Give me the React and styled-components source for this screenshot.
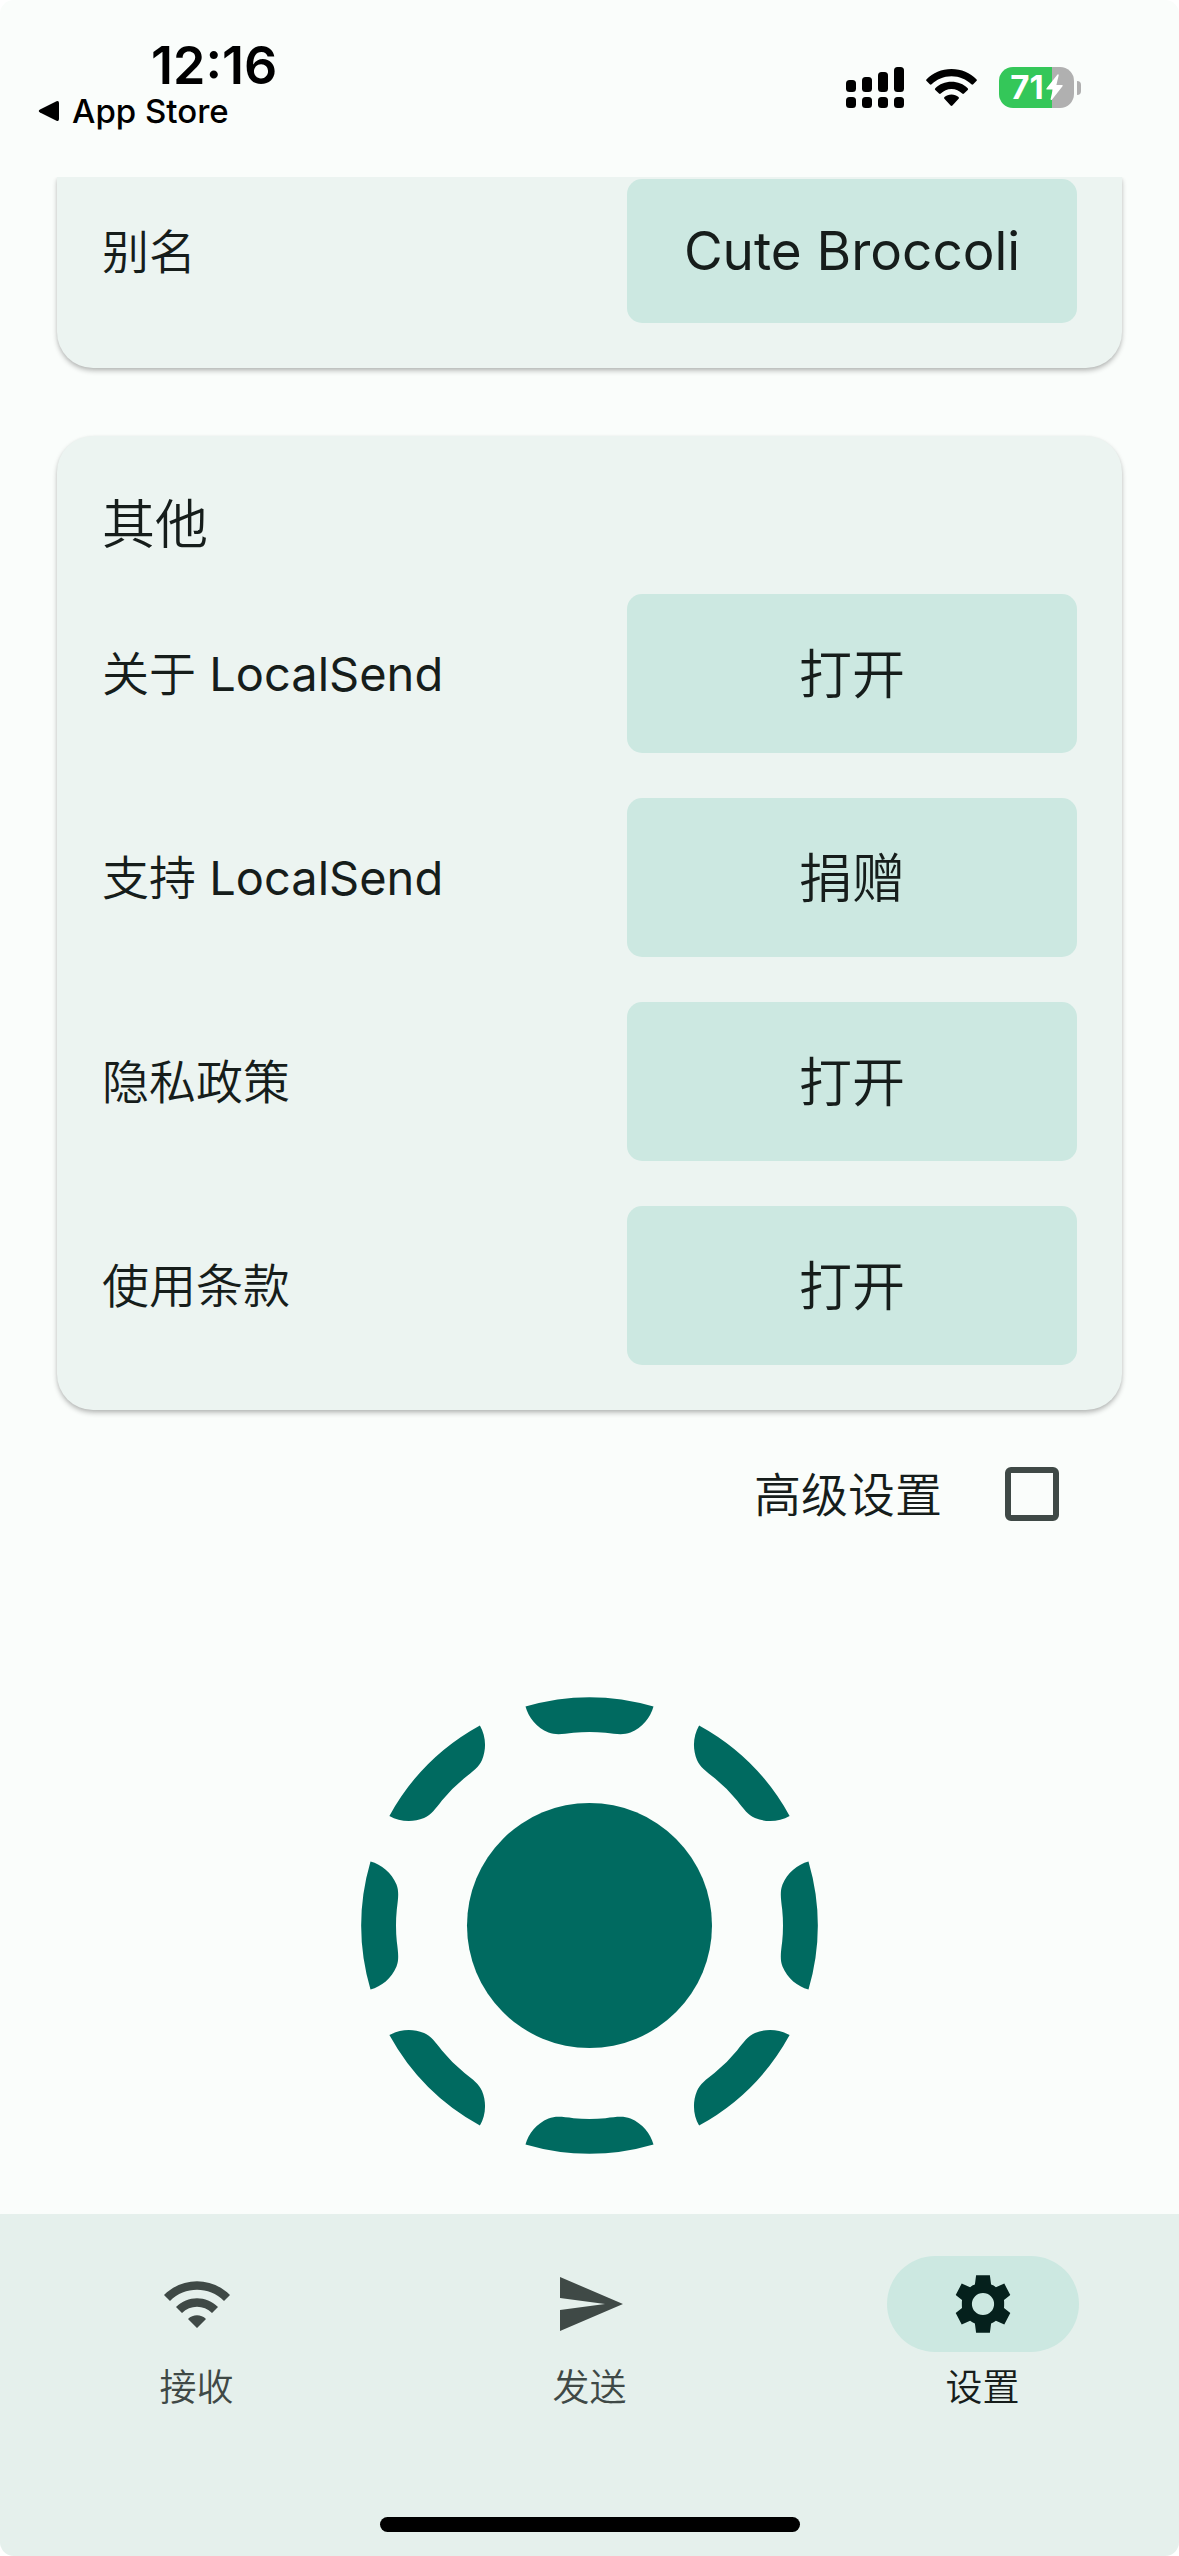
import React, { useState } from "react";
import styled, { createGlobalStyle } from "styled-components";

const color = {
  surface: "#fafdfb",
  card: "#ecf4f1",
  fill: "#cce8e1",
  nav: "#e5f0ec",
  primary: "#006a60",
  text: "#161d1b",
  muted: "#3f4946",
  strong: "#05201c",
};

const GlobalStyle = createGlobalStyle`
  * { box-sizing: border-box; }
  body {
    margin: 0;
    background: #ffffff;
    color: ${color.text};
    font-family: Inter, "Noto Sans CJK SC", sans-serif;
    font-weight: 350;
  }
  button, input { font: inherit; color: inherit; }
`;

const Screen = styled.div`
  display: flex;
  flex-direction: column;
  min-height: 100vh;
  border-radius: 14px;
  overflow: hidden;
  background: ${color.surface};
`;

const StatusBar = styled.header`
  display: flex;
  justify-content: space-between;
  align-items: flex-start;
  height: 177px;
  padding: 41px 98px 0 38px;
  color: #000000;
`;

const ClockColumn = styled.div`
  display: flex;
  flex-direction: column;
`;

const Clock = styled.time`
  padding-left: 113px;
  font-size: 52px;
  line-height: 50px;
  font-weight: 600;
`;

const BackLink = styled.a`
  display: flex;
  align-items: center;
  gap: 12px;
  font-size: 33px;
  line-height: 40px;
  font-weight: 500;
  color: inherit;
  text-decoration: none;
`;

const StatusIcons = styled.div`
  display: flex;
  align-items: center;
  gap: 22px;
  padding-top: 26px;
`;

const Battery = styled.div`
  display: flex;
  align-items: center;
  gap: 3px;
`;

const BatteryBody = styled.div`
  display: flex;
  align-items: center;
  justify-content: center;
  gap: 2px;
  width: 75px;
  height: 41px;
  border-radius: 14px;
  background: linear-gradient(to right, #34c759 71%, #b0b0b0 71%);
  color: #ffffff;
  font-size: 33px;
  line-height: 41px;
  font-weight: 700;
`;

const BatteryTip = styled.div`
  width: 4px;
  height: 14px;
  border-radius: 0 4px 4px 0;
  background: #b0b0b0;
`;

const Main = styled.main`
  display: flex;
  flex: 1;
  flex-direction: column;
  overflow: hidden;
  padding: 0 57px;
`;

const Card = styled.section`
  display: flex;
  flex-direction: column;
  gap: 45px;
  padding: ${(p) => (p.$scrolled ? "2px" : "45px")} 45px 45px;
  margin-bottom: ${(p) => (p.$scrolled ? "68px" : "12px")};
  border-radius: ${(p) => (p.$scrolled ? "0 0 36px 36px" : "36px")};
  background: ${color.card};
  box-shadow: 0 3px 5px rgba(0, 0, 0, 0.24), 0 1px 3px rgba(0, 0, 0, 0.06);
`;

const CardTitle = styled.h2`
  margin: 0 0 -20px;
  font-size: 53px;
  line-height: 88px;
  font-weight: inherit;
`;

const Row = styled.div`
  display: flex;
  align-items: center;
  justify-content: space-between;
`;

const RowLabel = styled.label`
  padding-top: 1px;
  font-size: 47px;
  line-height: 60px;
`;

const AppName = styled.span`
  font-weight: 400;
`;

const AliasInput = styled.input`
  width: 450px;
  height: 144px;
  padding: 0 24px;
  border: 0;
  border-radius: 15px;
  background: ${color.fill};
  font-size: 53px;
  font-weight: 400;
  text-align: center;
`;

const ActionButton = styled.button`
  width: 450px;
  height: 159px;
  padding: 2px 0 0;
  border: 0;
  border-radius: 15px;
  background: ${color.fill};
  font-size: 53px;
  line-height: 84px;
`;

const AdvancedRow = styled.div`
  display: flex;
  align-items: center;
  justify-content: flex-end;
  gap: 63px;
  height: 144px;
  padding-right: 63px;
`;

const Checkbox = styled.input`
  appearance: none;
  width: 54px;
  height: 54px;
  margin: 0;
  border: 6px solid ${color.muted};
  border-radius: 6px;
  &:checked { background: ${color.primary}; border-color: ${color.primary}; }
`;

const LogoArea = styled.div`
  display: flex;
  justify-content: center;
  padding: 131px 0 60px;
`;

const NavBar = styled.footer`
  display: flex;
  flex-direction: column;
  align-items: center;
  gap: 105px;
  padding: 42px 0 24px;
  background: ${color.nav};
`;

const NavList = styled.nav`
  display: grid;
  grid-template-columns: repeat(3, 1fr);
  width: 100%;
`;

const NavButton = styled.button`
  display: flex;
  flex-direction: column;
  align-items: center;
  gap: 12px;
  padding: 0;
  border: 0;
  background: none;
  font-size: 37px;
  line-height: 48px;
  color: ${(p) => (p.$active ? color.text : color.muted)};
`;

const NavPill = styled.span`
  display: flex;
  align-items: center;
  justify-content: center;
  width: 192px;
  height: 96px;
  border-radius: 48px;
  background: ${(p) => (p.$active ? color.fill : "transparent")};
  color: ${(p) => (p.$active ? color.strong : color.muted)};
`;

const HomeIndicator = styled.div`
  width: 420px;
  height: 15px;
  border-radius: 8px;
  background: #000000;
`;

const BackTriangle = () => (
  <svg width="22" height="22" viewBox="0 0 22 22" aria-hidden="true">
    <path d="M2 9.500 18.500 1.300Q21 .4 21 3v16q0 2.600-2.500 1.700L2 12.500Q-.5 11 2 9.500z" fill="currentColor" />
  </svg>
);

const SignalIcon = () => (
  <svg width="58" height="41" viewBox="0 0 58 41" aria-hidden="true">
    {[13, 10, 5, 0].map((top, i) => (
      <g key={top}>
        <rect x={i * 16} y={top} width="10" height={25 - top} rx="3.500" />
        <rect x={i * 16} y="30" width="10" height="11" rx="3.500" />
      </g>
    ))}
  </svg>
);

const StatusWifiIcon = () => (
  <svg width="51" height="38" viewBox="0 0 51 38" aria-hidden="true">
    <path d="M25.500 0C15.500 0 6.800 3.900.6 10.200q-.9 1 0 1.900l3.200 3.200q.9.800 1.800 0C10.800 10.200 17.700 7.200 25.500 7.200s14.700 3 19.900 8.100q.9.800 1.800 0l3.200-3.200q.9-.9 0-1.900C44.200 3.900 35.500 0 25.500 0z" />
    <path d="M25.500 12.800c-6.300 0-12 2.400-16.200 6.400q-.9.900 0 1.800l3.700 3.600q.9.800 1.800 0c2.800-2.700 6.500-4.500 10.700-4.500s7.900 1.800 10.700 4.500q.9.800 1.800 0l3.700-3.600q.9-.9 0-1.800c-4.200-4-9.900-6.400-16.200-6.400z" />
    <path d="M25.500 25.500c-2.700 0-5.200 1-7 2.500q-1 .9-.1 1.800l6.200 6.800q.9.900 1.800 0l6.200-6.800q.9-.9-.1-1.800c-1.800-1.500-4.300-2.500-7-2.500z" />
  </svg>
);

const BoltIcon = () => (
  <svg width="17" height="27" viewBox="0 0 17 27" aria-hidden="true">
    <path d="M11.500.5.6 14.200q-.8 1.300.6 1.300h5.600L4.600 25q0 1.600 1.300.8L16.500 12.300q.8-1.300-.6-1.300h-5.500L12.700 1.300Q12.600-.3 11.500.5z" fill="currentColor" />
  </svg>
);

const NavIcon = ({ path }) => (
  <svg width="72" height="72" viewBox="0 0 24 24" fill="currentColor" fillRule="evenodd" aria-hidden="true">
    <path d={path} />
  </svg>
);

const Logo = () => (
  <svg width="457" height="457" viewBox="-228.500 -228.500 457 457" fill={color.primary} role="img" aria-label="LocalSend">
    <circle r="122.500" />
    {[0, 45, 90, 135, 180, 225, 270, 315].map((angle) => (
      <path
        key={angle}
        transform={`rotate(${angle})`}
        d="M-64-219A228.300 228.300 0 0 1 64-219C61-208 53-198 41-193C34-190.300 27-191.300 16-192.700Q0-194.300-16-192.700C-27-191.300-34-190.300-41-193C-53-198-61-208-64-219z"
      />
    ))}
  </svg>
);

const links = [
  { id: "about", label: "关于 ", app: "LocalSend", action: "打开" },
  { id: "support", label: "支持 ", app: "LocalSend", action: "捐赠" },
  { id: "privacy", label: "隐私政策", action: "打开" },
  { id: "terms", label: "使用条款", action: "打开" },
];

const tabs = [
  {
    id: "receive",
    label: "接收",
    path: "M1 9l2 2c4.970-4.970 13.030-4.970 18 0l2-2C16.930 2.930 7.080 2.930 1 9zm8 8l3 3 3-3c-1.650-1.660-4.340-1.660-6 0zm-4-4l2 2c2.760-2.760 7.240-2.760 10 0l2-2C15.140 9.140 8.870 9.140 5 13z",
  },
  { id: "send", label: "发送", path: "M2.010 21L23 12 2.010 3 2 10l15 2-15 2z" },
  {
    id: "settings",
    label: "设置",
    path: "M9.700 2.400h4.600l.4 3.100q.9.300 1.600.9l2.800-1.200 2 3.800L19 10.700q.1 1.300 0 2.600l2.100 1.700-2 3.800-2.800-1.200q-.7.600-1.600.9l-.4 3.100H9.700l-.4-3.100q-.9-.3-1.600-.9l-2.800 1.200-2-3.800L5 13.300q-.1-1.300 0-2.600L2.900 9l2-3.800 2.800 1.200q.7-.6 1.600-.9zM12 8.300a3.700 3.700 0 1 0 0 7.400 3.700 3.700 0 0 0 0-7.400z",
  },
];

export default function App() {
  const [alias, setAlias] = useState("Cute Broccoli");
  const [advanced, setAdvanced] = useState(false);
  const [tab, setTab] = useState("settings");

  return (
    <>
      <GlobalStyle />
      <Screen>
        <StatusBar>
          <ClockColumn>
            <Clock>12:16</Clock>
            <BackLink href="#app-store">
              <BackTriangle />
              App Store
            </BackLink>
          </ClockColumn>
          <StatusIcons>
            <SignalIcon />
            <StatusWifiIcon />
            <Battery>
              <BatteryBody>
                71
                <BoltIcon />
              </BatteryBody>
              <BatteryTip />
            </Battery>
          </StatusIcons>
        </StatusBar>

        <Main>
          <Card $scrolled>
            <Row>
              <RowLabel htmlFor="alias">别名</RowLabel>
              <AliasInput id="alias" value={alias} onChange={(e) => setAlias(e.target.value)} />
            </Row>
          </Card>

          <Card>
            <CardTitle>其他</CardTitle>
            {links.map((link) => (
              <Row key={link.id}>
                <RowLabel htmlFor={link.id}>
                  {link.label}
                  {link.app && <AppName>{link.app}</AppName>}
                </RowLabel>
                <ActionButton id={link.id} type="button">{link.action}</ActionButton>
              </Row>
            ))}
          </Card>

          <AdvancedRow>
            <RowLabel htmlFor="advanced">高级设置</RowLabel>
            <Checkbox
              id="advanced"
              type="checkbox"
              checked={advanced}
              onChange={(e) => setAdvanced(e.target.checked)}
            />
          </AdvancedRow>

          <LogoArea>
            <Logo />
          </LogoArea>
        </Main>

        <NavBar>
          <NavList>
            {tabs.map((item) => (
              <NavButton key={item.id} type="button" $active={tab === item.id} onClick={() => setTab(item.id)}>
                <NavPill $active={tab === item.id}>
                  <NavIcon path={item.path} />
                </NavPill>
                {item.label}
              </NavButton>
            ))}
          </NavList>
          <HomeIndicator />
        </NavBar>
      </Screen>
    </>
  );
}
